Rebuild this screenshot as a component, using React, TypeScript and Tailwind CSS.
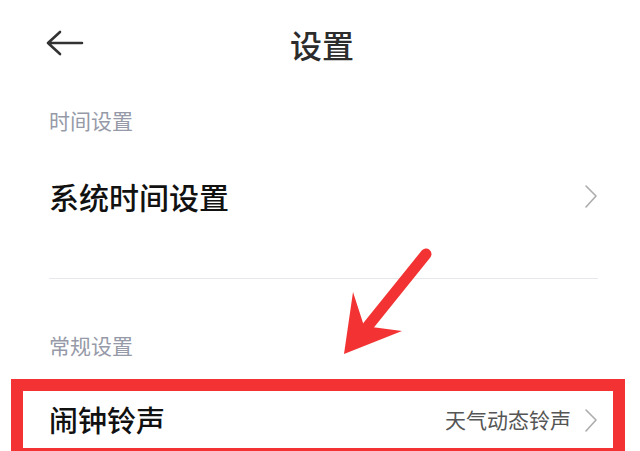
import React from "react";

function Chevron() {
  return (
    <svg width="14" height="24" viewBox="0 0 14 24" fill="none" className="shrink-0">
      <path d="M2 2 L12 12 L2 23" stroke="#acacac" strokeWidth="1.6" strokeLinecap="round" strokeLinejoin="round" />
    </svg>
  );
}

export default function App() {
  return (
    <div
      className="relative h-[451px] w-[640px] overflow-hidden bg-white"
      style={{ fontFamily: '"Noto Sans CJK SC", "Noto Sans", sans-serif' }}
    >
      <header className="relative flex h-[88px] items-center justify-center">
        <svg width="40" height="26" viewBox="0 0 40 26" className="absolute left-[44px] top-[30px]" fill="none">
          <path d="M4 13 H38 M16 2 L4 13 L16 24" stroke="#333" strokeWidth="2.6" strokeLinecap="round" strokeLinejoin="round" />
        </svg>
        <h1 className="pl-[4px] text-[32px] font-medium leading-none text-[#2c2c2c]">设置</h1>
      </header>

      <div className="pl-[49px] pr-[42px]">
        <div className="flex h-[64px] items-center text-[21px] leading-none text-[#969aa8]">时间设置</div>
        <div className="flex h-[88px] items-center justify-between">
          <span className="text-[30px] font-medium leading-none text-[#111]">系统时间设置</span>
          <Chevron />
        </div>
        <div className="mt-[38px] h-px bg-[#e6e7eb]" />
        <div className="mt-[51px] flex h-[30px] items-center text-[21px] leading-none text-[#969aa8]">常规设置</div>
      </div>

      <div className="relative ml-[11px] mr-[15px] mt-[19px] border-[12px] border-[#f33333]">
        <div className="flex h-[57px] items-center justify-between pl-[26px] pr-[15px]">
          <span className="text-[29px] font-medium leading-none text-[#111]">闹钟铃声</span>
          <div className="flex items-center gap-[13px]">
            <span className="text-[21px] leading-none text-[#555]">天气动态铃声</span>
            <Chevron />
          </div>
        </div>
      </div>

      <svg className="pointer-events-none absolute left-0 top-0" width="640" height="451" viewBox="0 0 640 451">
        <path d="M426 254 L368 326" stroke="#f33333" strokeWidth="11" strokeLinecap="round" />
        <path d="M344 354 L353 292 L364 326 L402 331 Z" fill="#f33333" />
      </svg>
    </div>
  );
}
